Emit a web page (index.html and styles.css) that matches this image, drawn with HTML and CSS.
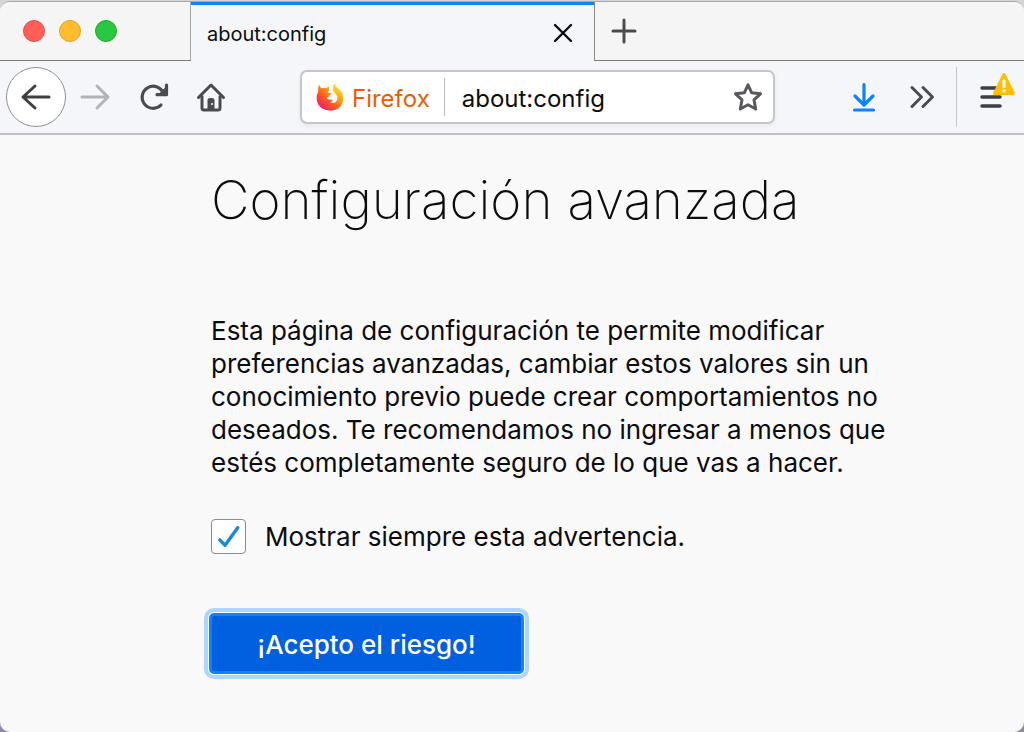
FILE: index.html
```html
<!DOCTYPE html>
<html lang="es">
<head>
<meta charset="utf-8">
<meta name="viewport" content="width=device-width, initial-scale=1">
<title>about:config</title>
<link rel="stylesheet" href="styles.css">
</head>
<body>
<div class="window">
  <header class="tabbar">
    <div class="lights">
      <button class="light light-close" aria-label="Cerrar ventana"></button>
      <button class="light light-min" aria-label="Minimizar"></button>
      <button class="light light-max" aria-label="Maximizar"></button>
    </div>
    <div class="tab">
      <span class="tab-title">about:config</span>
      <button class="icon-btn" aria-label="Cerrar pestaña">
        <svg width="20" height="20" viewBox="0 0 20 20" fill="none" stroke="#0c0c0d" stroke-width="2.400" stroke-linecap="round"><path d="M2 2l16 16M18 2l-16 16"/></svg>
      </button>
    </div>
    <div class="tab-rest">
      <button class="icon-btn" aria-label="Nueva pestaña">
        <svg width="26" height="26" viewBox="0 0 26 26" fill="none" stroke="#4a4d4d" stroke-width="3" stroke-linecap="round"><path d="M13 2v22M2 13h22"/></svg>
      </button>
    </div>
  </header>

  <nav class="navbar">
    <button class="icon-btn back" aria-label="Atrás">
      <svg width="32" height="28" viewBox="0 0 32 28" fill="none" stroke="#3e3f42" stroke-width="3" stroke-linecap="round" stroke-linejoin="round"><path d="M29 14H3M15 3L3 14l12 11"/></svg>
    </button>
    <button class="icon-btn forward" aria-label="Adelante">
      <svg width="32" height="28" viewBox="0 0 32 28" fill="none" stroke="#b3b4b6" stroke-width="3" stroke-linecap="round" stroke-linejoin="round"><path d="M3 14h26M18 3l11 11-11 11"/></svg>
    </button>
    <button class="icon-btn reload" aria-label="Recargar">
      <svg width="30" height="30" viewBox="0 0 30 30" fill="none" stroke="#4a4b4f" stroke-width="3.200" stroke-linecap="round" stroke-linejoin="round"><path d="M22 23A11 11 0 1 1 24.500 11.500"/><path d="M27.500 3v9.700H18"/><path d="M27 5.500v6.700h-6.500z" fill="#4a4b4f" stroke-width="1"/></svg>
    </button>
    <button class="icon-btn home" aria-label="Inicio">
      <svg width="30" height="30" viewBox="0 0 30 30" fill="none" stroke="#4a4b4f" stroke-width="3" stroke-linecap="round" stroke-linejoin="round"><path d="M2.500 15.500L15 3l12.500 12.500"/><path d="M6 14.500V26q0 2 2 2h14q2 0 2-2V14.500"/><path d="M12 27v-9q0-1.500 1.500-1.500h3q1.500 0 1.500 1.500v9z" fill="#4a4b4f" stroke-width="1"/><circle cx="16" cy="22" r="1" fill="#fff" stroke="none"/></svg>
    </button>

    <div class="urlbar">
      <span class="identity">
        <svg width="28" height="28" viewBox="0 0 28 28" aria-hidden="true">
          <defs>
            <linearGradient id="fox" x1=".9" y1=".1" x2=".2" y2=".9"><stop offset="0" stop-color="#ffd91a"/><stop offset=".35" stop-color="#ffa010"/><stop offset=".65" stop-color="#ff5a20"/><stop offset="1" stop-color="#f0206a"/></linearGradient>
            <linearGradient id="tail" x1="0" y1="0" x2="0" y2="1"><stop offset="0" stop-color="#ffe226"/><stop offset="1" stop-color="#ff9a16" stop-opacity="0"/></linearGradient>
          </defs>
          <path fill="url(#fox)" d="M3 1.500Q3.800 3.800 5.500 5.200 8 4.300 10 5L13.500 3.500Q12.800 6 13.200 7.200 11.800 8 11.500 9.300 12.800 10.200 15.500 10.200 15.700 11.500 13 12.800 12.800 15 10.500 14.800 11.500 17 14.500 16.500 16.200 16.200 16.800 17.200 16.500 18.800 14.300 19.500 17.500 21 20 18.800 22.500 16 20.800 12 19.800 10.300 17.500 8.500 16.200 4 18.500.8 19.500 3.800 22.500 5.800 27.500 10 27.300 15.500 26.500 27 14.500 27.700 3 27.200.8 17.500 0 12.500 2.200 8.500 1.800 4.500 3 1.500z"/>
          <path fill="url(#tail)" d="M18.500.8Q19.500 3.800 22.500 5.800 27.500 10 27.300 15.500 27 19.500 24.500 22.500 23.500 16 20.800 12 19.800 10.300 17.500 8.500 16.200 4 18.500.8z"/>
        </svg>
        <span class="identity-name">Firefox</span>
      </span>
      <input class="url" type="text" value="about:config" aria-label="Dirección">
      <button class="icon-btn" aria-label="Añadir a marcadores">
        <svg width="30" height="30" viewBox="0 0 30 30" fill="none" stroke="#58595c" stroke-width="3" stroke-linejoin="round"><path d="M15 2.800l3.700 8 8.800 1-6.500 6 1.700 9.200L15 22.800l-7.700 4.200L9 17.800l-6.500-6 8.800-1z"/></svg>
      </button>
    </div>

    <button class="icon-btn" aria-label="Descargas">
      <svg width="24" height="30" viewBox="0 0 24 30" fill="none" stroke="#0a84ff" stroke-width="3.200" stroke-linecap="round" stroke-linejoin="round"><path d="M12 2.500v20M3 14l9 9 9-9M2.500 28h19"/></svg>
    </button>
    <button class="icon-btn overflow" aria-label="Más herramientas">
      <svg width="26" height="24" viewBox="0 0 26 24" fill="none" stroke="#4a4b4f" stroke-width="3" stroke-linecap="round" stroke-linejoin="round"><path d="M3 2.500l9.500 9.500L3 21.500M14 2.500l9.500 9.500-9.500 9.500"/></svg>
    </button>
    <div class="menu-wrap">
      <button class="icon-btn menu" aria-label="Abrir menú">
        <svg width="22" height="24" viewBox="0 0 22 24" fill="none" stroke="#3e3f42" stroke-width="3.500" stroke-linecap="round"><path d="M2 3h18M2 12h18M2 21h18"/></svg>
        <svg class="warning" width="22" height="22" viewBox="0 0 22 22" aria-hidden="true"><path d="M11 1.500L20.500 20.500H1.500z" fill="#ffbf00" stroke="#ffbf00" stroke-width="3" stroke-linejoin="round"/><path d="M11 7.500v6" stroke="#fff" stroke-width="3" stroke-linecap="round"/><circle cx="11" cy="18" r="1.800" fill="#fff"/></svg>
      </button>
    </div>
  </nav>

  <main class="page">
    <h1 class="title">Configuración avanzada</h1>
    <p class="text">Esta página de configuración te permite modificar preferencias avanzadas, cambiar estos valores sin un conocimiento previo puede crear comportamientos no deseados. Te recomendamos no ingresar a menos que estés completamente seguro de lo que vas a hacer.</p>
    <label class="check">
      <span class="check-box">
        <input class="check-input" type="checkbox" checked>
        <svg class="check-mark" viewBox="0 0 36 36" fill="none" stroke="#168ad6" stroke-width="3.500" stroke-linecap="round" stroke-linejoin="round" aria-hidden="true"><path d="M9 21.500l5.500 5.500L27.500 9"/></svg>
      </span>
      <span class="check-label">Mostrar siempre esta advertencia.</span>
    </label>
    <button class="accept">¡Acepto el riesgo!</button>
  </main>
</div>
</body>
</html>
```
FILE: styles.css
```css
* { box-sizing: border-box; }
body {
  margin: 0;
  min-height: 100vh;
  display: flex;
  padding-top: 1px;
  background: linear-gradient(#d6d5d1 20px, #8f86b4 20px);
  font-family: Inter, "Liberation Sans", sans-serif;
  color: #0c0c0d;
}
button { font: inherit; color: inherit; border: 0; padding: 0; background: none; }
svg { display: block; flex: none; }
.window {
  flex: 1;
  display: flex;
  flex-direction: column;
  background: #f9f9fa;
  border-top: 1px solid #a8a8a8;
  border-radius: 10px;
  overflow: hidden;
}
.tabbar { display: flex; height: 59px; background: #f5f5f5; }
.lights {
  display: flex;
  align-items: center;
  gap: 14px;
  width: 191px;
  padding-left: 23px;
  border-right: 1px solid #a6a6a6;
  border-bottom: 1px solid #7d7d7d;
}
.light { width: 22px; height: 22px; border-radius: 50%; }
.light-close { background: #ff5f57; border: 1px solid #ee4744; }
.light-min { background: #ffbd2e; border: 1px solid #e5a024; }
.light-max { background: #28c840; border: 1px solid #1dac2c; }
.tab {
  display: flex;
  align-items: center;
  justify-content: space-between;
  width: 403px;
  padding: 0 21px 1px 16px;
  background: #f4f6f9;
  border-top: 3px solid #0a84ff;
}
.tab-title { padding-top: 2px; font-size: 20px; }
.icon-btn { display: flex; align-items: center; justify-content: center; flex: none; }
.tab-rest {
  flex: 1;
  display: flex;
  align-items: center;
  padding-left: 16px;
  border-left: 1px solid #8a8a8a;
  border-bottom: 1px solid #7d7d7d;
}
.navbar {
  display: flex;
  align-items: center;
  height: 74px;
  padding: 0 22px 0 6px;
  background: #f4f6f9;
  border-bottom: 2px solid #c0c0c1;
}
.back { width: 60px; height: 60px; background: #fff; border: 1px solid #8f9092; border-radius: 50%; }
.forward { margin-left: 13px; }
.reload { margin-left: 28px; }
.home { margin-left: 27px; }
.urlbar {
  flex: 1;
  display: flex;
  align-items: center;
  min-width: 0;
  height: 54px;
  margin: 0 77px 0 74px;
  padding: 0 10px 0 14px;
  background: #fff;
  border: 2px solid #c5c6c8;
  border-radius: 7px;
  box-shadow: 0 2px 5px #0000000f;
}
.identity {
  display: flex;
  align-items: center;
  gap: 8px;
  height: 38px;
  padding-right: 14px;
  border-right: 1px solid #bbb;
  font-size: 24px;
  color: #e66000;
}
.identity-name { padding-top: 2px; }
.url {
  flex: 1;
  min-width: 0;
  padding: 2px 0 0 17px;
  border: 0;
  outline: 0;
  background: none;
  font: inherit;
  font-size: 24px;
  color: #0c0c0d;
}
.overflow { margin-left: 33px; }
.menu-wrap {
  display: flex;
  align-items: center;
  height: 60px;
  margin-left: 21px;
  padding-left: 23px;
  border-left: 1px solid #c4c5c7;
}
.menu { position: relative; }
.warning { position: absolute; left: 13px; top: -12px; }
.page { padding: 31px 100px 54px 211px; }
.title { margin: 0; font-size: 53px; font-weight: 200; line-height: 68px; }
.text { margin: 80px 0 0; max-width: 700px; font-size: 26px; line-height: 33px; }
.check { display: flex; align-items: center; gap: 19px; margin-top: 38px; font-size: 26px; line-height: 36px; }
.check-label { padding-top: 2px; }
.check-box { display: grid; width: 35px; height: 35px; }
.check-input {
  grid-area: 1 / 1;
  appearance: none;
  width: 100%;
  height: 100%;
  margin: 0;
  background: #fff;
  border: 1px solid #8c8c8d;
  border-radius: 4px;
}
.check-mark { grid-area: 1 / 1; width: 100%; height: 100%; pointer-events: none; }
.accept {
  margin: 58px 0 0 -2px;
  min-width: 315px;
  height: 61px;
  padding: 1px 30px 0;
  background: #0060df;
  border: 3px solid #0a84ff;
  border-radius: 5px;
  box-shadow: 0 0 0 1px #fff, 0 0 0 5px #add5ff;
  color: #fff;
  font-size: 26px;
  font-weight: 500;
}
```
